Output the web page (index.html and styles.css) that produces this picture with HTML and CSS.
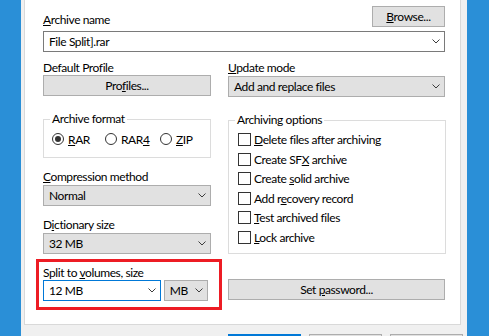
FILE: index.html
```html
<html>
<head>
  <title>Archive name and parameters</title>
  <link rel="stylesheet" href="styles.css">
</head>
<body>
  <div class="dialog">
    <div class="panel">
      <div class="name-row">
        <div class="label"><u>A</u>rchive name</div>
        <button class="btn browse"><u>B</u>rowse...</button>
      </div>
      <div class="combo edit">
        <span>File Split].rar</span>
        <svg class="chev" width="8" height="5" viewBox="0 0 8 5"><polyline points="0.5,0.5 4,4 7.5,0.5" /></svg>
      </div>

      <div class="columns">
        <div class="col left">
          <div class="label">Default Profile</div>
          <button class="btn">Pro<u>f</u>iles...</button>

          <fieldset class="group format">
            <legend>Archive format</legend>
            <div class="radios">
              <span class="radio-item rar"><span class="radio checked"></span><span><u>R</u>AR</span></span>
              <span class="radio-item rar4"><span class="radio"></span><span>RAR<u>4</u></span></span>
              <span class="radio-item"><span class="radio"></span><span><u>Z</u>IP</span></span>
            </div>
          </fieldset>

          <div class="label spaced"><u>C</u>ompression method</div>
          <div class="combo list">
            <span>Normal</span>
            <svg class="chev" width="8" height="5" viewBox="0 0 8 5"><polyline points="0.5,0.5 4,4 7.5,0.5" /></svg>
          </div>

          <div class="label spaced">D<u>i</u>ctionary size</div>
          <div class="combo list">
            <span>32 MB</span>
            <svg class="chev" width="8" height="5" viewBox="0 0 8 5"><polyline points="0.5,0.5 4,4 7.5,0.5" /></svg>
          </div>

          <div class="highlight">
            <div class="label">Split to <u>v</u>olumes, size</div>
            <div class="split-row">
              <div class="combo edit focused size">
                <span>12 MB</span>
                <svg class="chev" width="8" height="5" viewBox="0 0 8 5"><polyline points="0.5,0.5 4,4 7.5,0.5" /></svg>
              </div>
              <div class="combo list unit">
                <span>MB</span>
                <svg class="chev" width="8" height="5" viewBox="0 0 8 5"><polyline points="0.5,0.5 4,4 7.5,0.5" /></svg>
              </div>
            </div>
          </div>
        </div>

        <div class="col right">
          <div class="label"><u>U</u>pdate mode</div>
          <div class="combo list">
            <span>Add and replace files</span>
            <svg class="chev" width="8" height="5" viewBox="0 0 8 5"><polyline points="0.5,0.5 4,4 7.5,0.5" /></svg>
          </div>

          <fieldset class="group options">
            <legend>Archiving options</legend>
            <div class="check-item"><span class="check"></span><span><u>D</u>elete files after archiving</span></div>
            <div class="check-item"><span class="check"></span><span>Create SF<u>X</u> archive</span></div>
            <div class="check-item"><span class="check"></span><span>Create <u>s</u>olid archive</span></div>
            <div class="check-item"><span class="check"></span><span>Add r<u>e</u>covery record</span></div>
            <div class="check-item"><span class="check"></span><span><u>T</u>est archived files</span></div>
            <div class="check-item"><span class="check"></span><span><u>L</u>ock archive</span></div>
          </fieldset>

          <button class="btn password">Set <u>p</u>assword...</button>
        </div>
      </div>
    </div>

    <!-- dialog buttons, only their top edge is in view -->
    <div class="actions">
      <button class="btn action default"></button>
      <button class="btn action"></button>
      <button class="btn action"></button>
    </div>
  </div>
</body>
</html>
```

FILE: styles.css
```css
body {
  margin: 0;
  background-color: #2a8fd7;
  font-family: "Lato", "Noto Sans", sans-serif;
  font-size: 12px;
  letter-spacing: -0.4px;
  color: #000000;
  overflow: hidden;
}

.dialog {
  margin-left: 21px;
  width: 446px;
  height: 336px;
  background-color: #f0f0f0;
  overflow: hidden;
}

.panel {
  box-sizing: border-box;
  margin-left: 3px;
  width: 437px;
  height: 325px;
  background-color: #ffffff;
  border: 1px solid #d9d9d9;
  border-top: none;
  padding: 6px 15px 0 18px;
}

.label {
  line-height: 15px;
  height: 15px;
  white-space: nowrap;
}

.label.spaced {
  margin-top: 11px;
}

.name-row {
  display: flex;
  justify-content: space-between;
  align-items: flex-end;
}

.btn {
  box-sizing: border-box;
  display: block;
  height: 21px;
  width: 100%;
  padding: 0;
  background-color: #e1e1e1;
  border: 1px solid #adadad;
  font-family: inherit;
  font-size: 12px;
  letter-spacing: inherit;
  color: #000000;
  line-height: 19px;
  text-align: center;
}

.btn.browse {
  width: 73px;
}

.combo {
  box-sizing: border-box;
  display: flex;
  align-items: center;
  justify-content: space-between;
  height: 21px;
  padding: 0 4px 0 5px;
  white-space: nowrap;
}

.combo.edit {
  margin-top: 4px;
  background-color: #ffffff;
  border: 1px solid #7a7a7a;
}

.combo.list {
  margin-top: 1px;
  background-color: #e1e1e1;
  border: 1px solid #adadad;
}

.chev polyline {
  fill: none;
  stroke: #3c3c3c;
  stroke-width: 1;
}

.columns {
  display: flex;
  gap: 17px;
  margin-top: 8px;
}

.col.left {
  width: 168px;
}

.col.right {
  width: 218px;
}

.group {
  margin: 16px 0 0 0;
  padding: 0 6px 10px 6px;
  border: 1px solid #dcdcdc;
  min-width: 0;
}

.group legend {
  padding: 0 2px;
  line-height: 14px;
}

.radios {
  display: flex;
  height: 16px;
  margin: 5px 0 0 2px;
  align-items: center;
}

.radio-item {
  display: flex;
  align-items: center;
}

.radio-item.rar {
  width: 53px;
}

.radio-item.rar4 {
  width: 55px;
}

.radio {
  box-sizing: border-box;
  width: 12px;
  height: 12px;
  border: 1px solid #333333;
  border-radius: 50%;
  margin-right: 4px;
  position: relative;
}

.radio.checked::after {
  content: "";
  position: absolute;
  left: 2px;
  top: 2px;
  width: 6px;
  height: 6px;
  border-radius: 50%;
  background-color: #333333;
}

.options {
  padding-bottom: 6px;
  margin-right: -1px;
}

.check-item {
  display: flex;
  align-items: center;
  height: 19.5px;
  margin-left: 3px;
  white-space: nowrap;
}

.check-item:first-of-type {
  margin-top: 3px;
}

.check {
  box-sizing: border-box;
  width: 13px;
  height: 13px;
  border: 1px solid #333333;
  background-color: #ffffff;
  margin-right: 3px;
  flex-shrink: 0;
}

.highlight {
  margin: 5px -11px 0 -7px;
  border: 3px solid #ed1c24;
  padding: 3px 11px 6px 4px;
}

.split-row {
  display: flex;
  gap: 3px;
}

.combo.focused {
  border-color: #0078d7;
  margin-top: 0;
}

.combo.size {
  width: 120px;
}

.combo.unit {
  width: 45px;
  margin-top: 0;
}

.btn.password {
  margin-top: 25px;
}

.actions {
  display: flex;
  justify-content: flex-end;
  gap: 8px;
  margin-top: 9px;
  padding-right: 4px;
}

.btn.action {
  width: 73px;
  height: 23px;
}

.btn.default {
  border: 2px solid #0078d7;
}
```
